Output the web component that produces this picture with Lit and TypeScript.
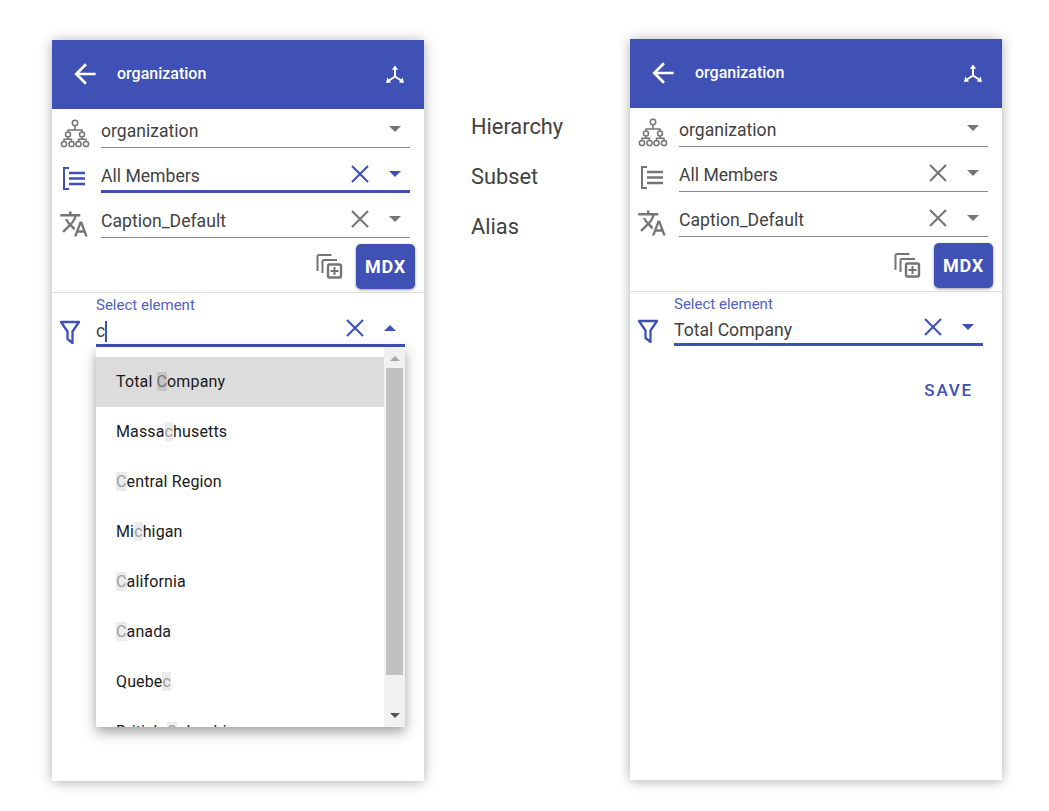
import { LitElement, html, css, svg, unsafeCSS } from "lit";
import { customElement, property } from "lit/decorators.js";

const BLUE = "#3f51b5";
const GREY = "#757575";
const blue = unsafeCSS(BLUE);

const icon = (size: number, vb: string, body: unknown) =>
  html`<svg width=${size} height=${size} viewBox=${vb} fill="none">${body}</svg>`;

const hierarchyIcon = () =>
  icon(32, "0 0 32 32", svg`<g stroke=${GREY} stroke-width="1.5" fill="none">
    <circle cx="16" cy="4" r="2.700"/><circle cx="9" cy="15.500" r="2.500"/><circle cx="23" cy="15.500" r="2.500"/>
    <circle cx="5" cy="25" r="2.600"/><circle cx="12.500" cy="25" r="2.600"/><circle cx="19.500" cy="25" r="2.600"/><circle cx="27" cy="25" r="2.600"/>
    <path d="M16 6.700v4.300M9 13v-2h14v2M9 18v2.200M5 22.400v-2.200h7.500v2.200M23 18v2.200M19.500 22.400v-2.200H27v2.200"/></g>`);

const subsetIcon = (c: string) =>
  icon(30, "0 0 30 30", svg`<g stroke=${c} fill="none"><path stroke-width="2" d="M10 5H5v21h5"/>
    <path stroke-width="2.500" d="M10 10h16M10 15.500h16M10 21h16"/></g>`);

const translateIcon = () =>
  icon(30, "0 0 24 24", svg`<path fill=${GREY} d="M12.87 15.07l-2.54-2.51.03-.03c1.74-1.94 2.98-4.17 3.71-6.53H17V4h-7V2H8v2H1v1.99h11.17C11.5 7.92 10.44 9.75 9 11.35 8.07 10.32 7.3 9.19 6.69 8h-2c.73 1.63 1.73 3.17 2.98 4.56l-5.09 5.02L4 19l5-5 3.11 3.11.76-2.04zM18.5 10h-2L12 22h2l1.12-3h4.75L21 22h2l-4.5-12zm-2.62 7l1.62-4.33L19.12 17h-3.24z"/>`);

const funnelIcon = () =>
  icon(24, "0 0 24 24", svg`<path stroke=${BLUE} stroke-width="2.300" stroke-linejoin="round" d="M3 2h18l-6.500 9.500V23L9.500 19v-7.500z"/>`);

const closeIcon = (c: string) =>
  icon(20, "0 0 20 20", svg`<path stroke=${c} stroke-width="2.100" d="M2 2l16 16M18 2L2 18"/>`);

const backIcon = () =>
  icon(32, "0 0 24 24", svg`<path fill="#fff" d="M20 11H7.830l5.590-5.590L12 4l-8 8 8 8 1.410-1.410L7.830 13H20v-2z"/>`);

const axisIcon = () =>
  icon(20, "0 0 20 20", svg`<path stroke="#fff" stroke-width="2" fill="none" d="M10 5v7.500L4 16.500M10 12.500l6 4"/>
    <path fill="#fff" d="M10 1.500l3.200 4.200H6.800zM1 19l1.300-5.500 3.800 5zM19 19l-1.300-5.500-3.800 5z"/>`);

const copyIcon = () =>
  icon(28, "0 0 28 28", svg`<g stroke=${GREY} fill="none" stroke-width="2"><path d="M2.500 19V4.500a1.500 1.500 0 0 1 1.500-1.500h12.500M7.500 21V9.500A1.500 1.500 0 0 1 9 8h13"/>
    <rect x="13" y="12.500" width="13" height="13" rx="1.500" stroke-width="2.400"/>
    <path d="M19.500 15v8M15.500 19h8"/></g>`);

const shared = css`
  svg { display: block; }
  .x { display: flex; margin-right: 10px; transform: translateY(-2px); }
  .a { width: 30px; display: flex; justify-content: center; transform: translateY(-2px); }
  .caret { width: 0; height: 0; border-left: 6px solid transparent; border-right: 6px solid transparent; border-top: 6px solid var(--c); }
  .caret.up { border-top: 0; border-bottom: 6px solid var(--c); }
`;

const caret = (up: boolean, c: string) =>
  html`<span class="caret ${up ? "up" : ""}" style="--c:${c}"></span>`;

@customElement("select-row")
class SelectRow extends LitElement {
  @property() text = "";
  @property({ type: Boolean }) active = false;
  @property({ type: Boolean }) clearable = false;
  static styles = [
    shared,
    css`
      :host { display: flex; flex: 1; min-width: 0; height: 100%; }
      .f { flex: 1; display: flex; align-items: center; border-bottom: 1px solid #8a8a8a; padding-top: 12px; }
      :host([first]) .f { padding-top: 5px; }
      :host([mid]) .f { padding-top: 11px; }
      :host([mid]) .f.active { padding-top: 14px; border-bottom: 3px solid ${blue}; }
      .t { flex: 1; font-size: 17.6px; color: #424242; line-height: 24px; }
    `,
  ];
  render() {
    const c = this.active ? BLUE : GREY;
    return html`<div class="f ${this.active ? "active" : ""}">
      <span class="t">${this.text}</span>
      ${this.clearable ? html`<span class="x">${closeIcon(c)}</span>` : ""}
      <span class="a">${caret(false, c)}</span>
    </div>`;
  }
}

@customElement("tm-panel")
class TmPanel extends LitElement {
  @property({ type: Boolean }) open = false;
  static styles = [
    shared,
    css`
      :host { display: block; width: 372px; height: 741px; background: #fff; box-shadow: 0 1px 12px rgba(0,0,0,.32); position: relative; font-family: Roboto, sans-serif; flex: none; }
      header { height: 67px; background: ${blue}; display: flex; align-items: center; color: #fff; font-size: 16px; font-weight: 500; padding: 0 19px 2px 17px; }
      header .title { flex: 1; margin-left: 16px; }
      .row { display: flex; padding-right: 14px; }
      .ic { width: 49px; padding-left: 7px; box-sizing: border-box; display: flex; align-items: center; }
      .r1 { height: 39px; }
      .r2 { height: 45px; }
      .r3 { height: 45px; }
      .r1 .ic { padding-top: 13px; }
      .r2 .ic { padding-top: 15px; }
      .r3 .ic { padding-top: 17px; }
      .actions { display: flex; justify-content: flex-end; align-items: center; padding: 6px 9px 0 0; gap: 13px; }
      .copy { padding-bottom: 2px; }
      .mdx { width: 59px; height: 45px; border-radius: 5px; background: ${blue}; color: #fff; font-size: 18px; font-weight: 700; letter-spacing: .8px; display: flex; align-items: center; justify-content: center; box-shadow: 0 1px 3px rgba(0,0,0,.4); }
      hr { border: 0; border-top: 1px solid #e0e0e0; margin: 3px 0 0; }
      .filter { display: flex; padding: 4px 19px 0 6px; position: relative; }
      .filter .fi { width: 38px; padding-top: 23px; flex: none; }
      .fc { flex: 1; min-width: 0; }
      .lbl { font-size: 15px; color: #5262c0; line-height: 16px; }
      .inp { height: 31px; border-bottom: 3px solid ${blue}; display: flex; align-items: center; }
      .val { flex: 1; font-size: 17.6px; color: #424242; display: flex; align-items: center; padding-top: 5px; }
      .cur { display: inline-block; width: 2px; height: 21px; background: ${blue}; }
      .inp .x, .inp .a { transform: translateY(-1px); }
      .save { text-align: right; padding: 34px 29px 0 0; font-size: 17px; font-weight: 500; letter-spacing: 1.800px; color: ${blue}; }
      .menu { position: absolute; left: 44px; top: 307px; width: 309px; height: 380px; background: #fff; box-shadow: 0 5px 12px rgba(0,0,0,.38); overflow: hidden; display: flex; z-index: 2; }
      .list { flex: 1; padding-top: 10px; overflow: hidden; }
      .item { height: 48px; display: flex; align-items: center; padding: 0 0 2px 20px; font-size: 16px; color: #1a1a1a; letter-spacing: .13px; }
      .item.sel { background: #dcdcdc; }
      .item b { font-weight: 400; background: #ececec; color: #9e9e9e; line-height: 19px; }
      .item.sel b { background: #c4c4c4; color: #757575; }
      .sb { width: 21px; background: #f1f1f1; display: flex; flex-direction: column; align-items: center; }
      .sb .up { margin-top: 9px; border-left: 5px solid transparent; border-right: 5px solid transparent; border-bottom: 5px solid #a6a6a6; }
      .thumb { width: 17px; height: 307px; background: #c1c1c1; margin-top: 7px; margin-bottom: 38px; }
      .sb .dn { border-left: 5px solid transparent; border-right: 5px solid transparent; border-top: 5px solid #555; }
    `,
  ];

  private hl(text: string) {
    return text.split("").map(ch => (ch.toLowerCase() === "c" ? html`<b>${ch}</b>` : ch));
  }

  render() {
    const items = ["Total Company", "Massachusetts", "Central Region", "Michigan", "California", "Canada", "Quebec", "British Columbia"];
    const c2 = this.open ? BLUE : GREY;
    return html`
      <header>${backIcon()}<span class="title">organization</span>${axisIcon()}</header>
      <div class="row r1"><span class="ic">${hierarchyIcon()}</span><select-row first text="organization"></select-row></div>
      <div class="row r2"><span class="ic">${subsetIcon(c2)}</span><select-row mid text="All Members" clearable ?active=${this.open}></select-row></div>
      <div class="row r3"><span class="ic">${translateIcon()}</span><select-row text="Caption_Default" clearable></select-row></div>
      <div class="actions"><span class="copy">${copyIcon()}</span><span class="mdx">MDX</span></div>
      <hr />
      <div class="filter">
        <span class="fi">${funnelIcon()}</span>
        <div class="fc">
          <div class="lbl">Select element</div>
          <div class="inp">
            <span class="val">${this.open ? html`c<span class="cur"></span>` : "Total Company"}</span>
            <span class="x">${closeIcon(BLUE)}</span>
            <span class="a">${caret(this.open, BLUE)}</span>
          </div>
        </div>
      </div>
      ${this.open
        ? html`<div class="menu">
            <div class="list">
              ${items.map((t, i) => html`<div class="item ${i === 0 ? "sel" : ""}"><span>${this.hl(t)}</span></div>`)}
            </div>
            <div class="sb"><span class="up"></span><span class="thumb"></span><span class="dn"></span></div>
          </div>`
        : html`<div class="save">SAVE</div>`}
    `;
  }
}

@customElement("app-root")
export class AppRoot extends LitElement {
  static styles = css`
    :host { display: block; width: 1049px; height: 811px; background: #fff; font-family: Roboto, sans-serif; overflow: hidden; }
    .page { display: flex; padding: 40px 0 0 52px; align-items: flex-start; }
    .labels { box-sizing: border-box; width: 206px; padding: 75px 0 0 47px; flex: none; font-size: 21.800px; color: #424242; display: flex; flex-direction: column; gap: 26px; line-height: 24px; }
    .second { margin-top: -1px; }
  `;
  render() {
    return html`<div class="page">
      <tm-panel open></tm-panel>
      <div class="labels"><span>Hierarchy</span><span>Subset</span><span>Alias</span></div>
      <tm-panel class="second"></tm-panel>
    </div>`;
  }
}
